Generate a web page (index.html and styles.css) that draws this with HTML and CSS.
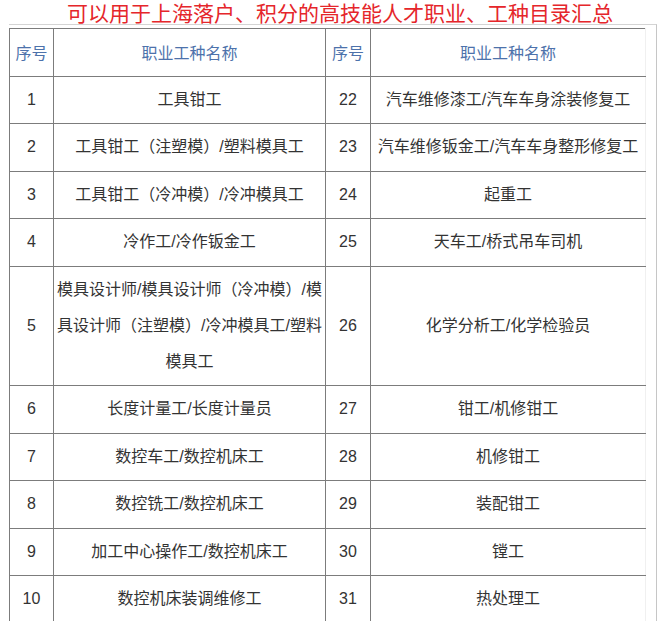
FILE: index.html
```html
<!DOCTYPE html>
<html lang="zh-CN">
<head>
<meta charset="utf-8">
<title>高技能人才职业、工种目录汇总</title>
<link rel="stylesheet" href="styles.css">
</head>
<body>
<h1 class="title">可以用于上海落户、积分的高技能人才职业、工种目录汇总</h1>
<div class="frame">
  <table class="list">
    <colgroup>
      <col class="c-no">
      <col class="c-name">
      <col class="c-no2">
      <col class="c-name2">
    </colgroup>
    <thead>
      <tr><th>序号</th><th>职业工种名称</th><th>序号</th><th>职业工种名称</th></tr>
    </thead>
    <tbody>
      <tr><td>1</td><td>工具钳工</td><td>22</td><td>汽车维修漆工/汽车车身涂装修复工</td></tr>
      <tr><td>2</td><td>工具钳工（注塑模）/塑料模具工</td><td>23</td><td>汽车维修钣金工/汽车车身整形修复工</td></tr>
      <tr><td>3</td><td>工具钳工（冷冲模）/冷冲模具工</td><td>24</td><td>起重工</td></tr>
      <tr><td>4</td><td>冷作工/冷作钣金工</td><td>25</td><td>天车工/桥式吊车司机</td></tr>
      <tr><td>5</td><td>模具设计师/模具设计师（冷冲模）/模具设计师（注塑模）/冷冲模具工/塑料模具工</td><td>26</td><td>化学分析工/化学检验员</td></tr>
      <tr><td>6</td><td>长度计量工/长度计量员</td><td>27</td><td>钳工/机修钳工</td></tr>
      <tr><td>7</td><td>数控车工/数控机床工</td><td>28</td><td>机修钳工</td></tr>
      <tr><td>8</td><td>数控铣工/数控机床工</td><td>29</td><td>装配钳工</td></tr>
      <tr><td>9</td><td>加工中心操作工/数控机床工</td><td>30</td><td>镗工</td></tr>
      <tr><td>10</td><td>数控机床装调维修工</td><td>31</td><td>热处理工</td></tr>
    </tbody>
  </table>
</div>
</body>
</html>
```

FILE: styles.css
```css
html, body {
  margin: 0;
  padding: 0;
  background: #ffffff;
}

body {
  width: 662px;
  height: 621px;
  overflow: hidden;
  font-family: "Liberation Sans", "Noto Sans CJK SC", sans-serif;
}

.title {
  margin: 0;
  padding-left: 18px;
  height: 24px;
  font-family: "Noto Sans CJK SC", sans-serif;
  font-size: 21px;
  line-height: 24px;
  font-weight: 400;
  color: #e5262b;
  text-align: center;
  white-space: nowrap;
}

.frame {
  margin-left: 9px;
  width: 647px;
  border-top: 1px solid #d4d4d4;
  border-right: 1px solid #c6c6c6;
  padding-top: 3px;
  height: 620px;
}

.list {
  border-collapse: collapse;
  table-layout: fixed;
  width: 636px;
}

.c-no { width: 44px; }
.c-name { width: 272px; }
.c-no2 { width: 45px; }
.c-name2 { width: 275px; }

.list th,
.list td {
  border: 1px solid #7c7c7c;
  padding: 5.25px 0;
  line-height: 36px;
  font-size: 16px;
  text-align: center;
  vertical-align: middle;
  font-weight: 400;
}

.list th {
  color: #4d72ab;
  font-family: "Noto Sans CJK SC", sans-serif;
}

.list td {
  color: #333333;
}

.list th:last-child,
.list td:last-child {
  border-right: 1px solid #f0f0f0;
}
```
